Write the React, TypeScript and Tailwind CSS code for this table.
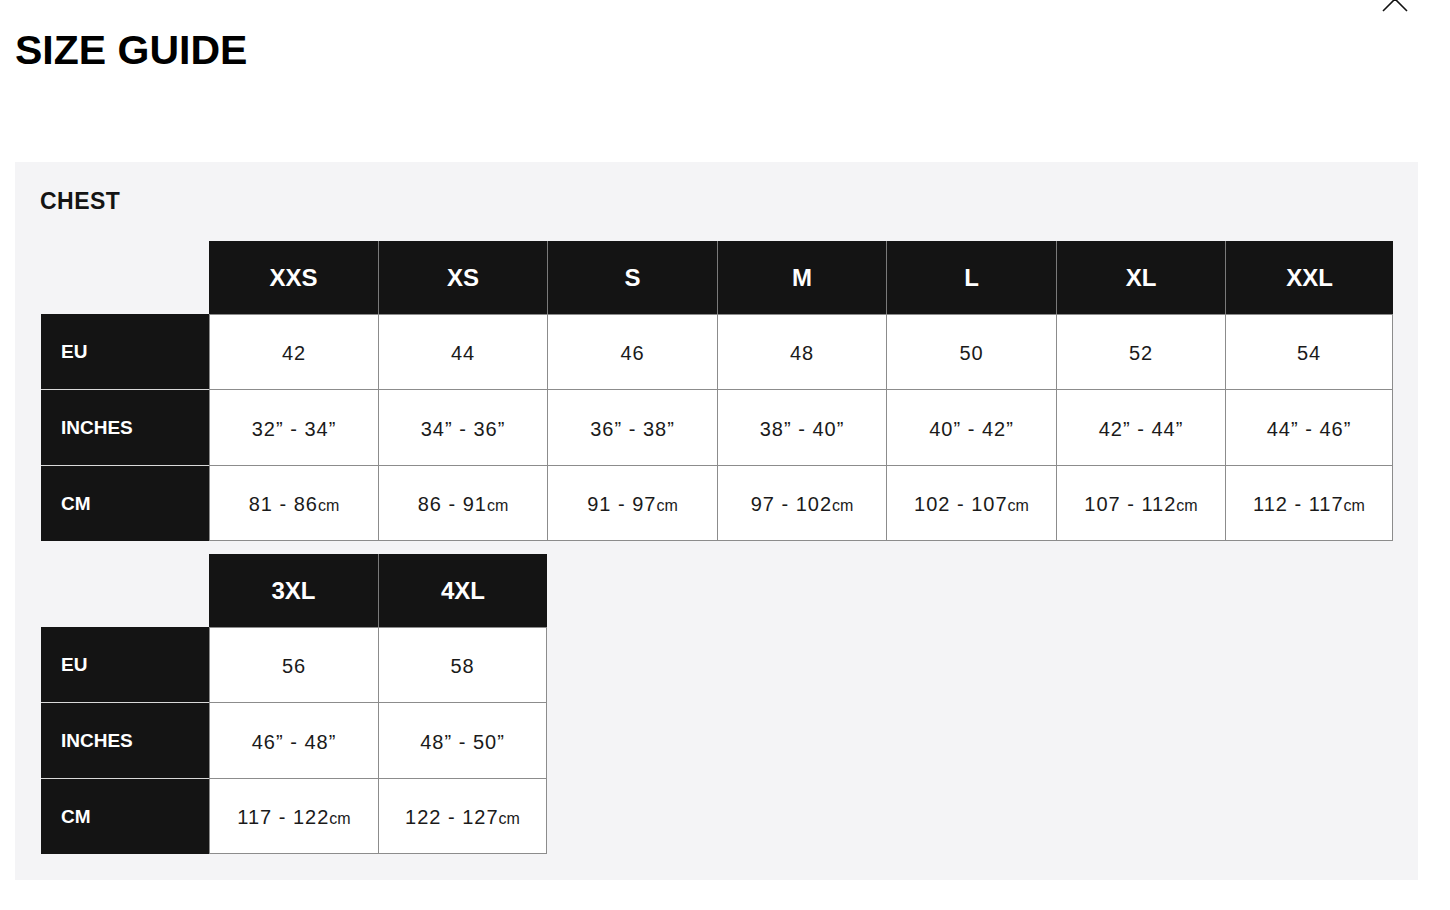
import React from 'react';

type Row = { label: string; values: React.ReactNode[] };

const colWidths = ['w-[169px]', 'w-[169px]', 'w-[170px]', 'w-[169px]', 'w-[170px]', 'w-[169px]', 'w-[168px]'];
const rowHeights = ['h-[75px]', 'h-[76px]', 'h-[76px]'];

const cm = (a: number, b: number) => (
  <>
    {a} - {b}
    <span className="text-[16px] tracking-normal">cm</span>
  </>
);

const tableOne = {
  sizes: ['XXS', 'XS', 'S', 'M', 'L', 'XL', 'XXL'],
  rows: [
    { label: 'EU', values: ['42', '44', '46', '48', '50', '52', '54'] },
    {
      label: 'INCHES',
      values: ['32” - 34”', '34” - 36”', '36” - 38”', '38” - 40”', '40” - 42”', '42” - 44”', '44” - 46”'],
    },
    {
      label: 'CM',
      values: [cm(81, 86), cm(86, 91), cm(91, 97), cm(97, 102), cm(102, 107), cm(107, 112), cm(112, 117)],
    },
  ] as Row[],
};

const tableTwo = {
  sizes: ['3XL', '4XL'],
  rows: [
    { label: 'EU', values: ['56', '58'] },
    { label: 'INCHES', values: ['46” - 48”', '48” - 50”'] },
    { label: 'CM', values: [cm(117, 122), cm(122, 127)] },
  ] as Row[],
};

function SizeTable({ sizes, rows }: { sizes: string[]; rows: Row[] }) {
  return (
    <div className="flex flex-col ml-[1px]">
      <div className="flex">
        <div className="w-[168px] h-[73px]" />
        {sizes.map((s, i) => (
          <div
            key={s}
            className={`${colWidths[i]} h-[73px] bg-[#141414] text-white font-bold text-[24px] flex items-center justify-center ${
              i > 0 ? 'border-l border-[#7a7a7a]' : ''
            }`}
          >
            {s}
          </div>
        ))}
      </div>
      {rows.map((row, r) => (
        <div key={row.label} className="flex">
          <div
            className={`w-[168px] ${rowHeights[r]} bg-[#141414] text-white font-bold text-[19px] flex items-center pl-[20px] pt-[2px] ${
              r > 0 ? 'border-t border-[#d9d9d9]' : ''
            }`}
          >
            {row.label}
          </div>
          {row.values.map((v, i) => (
            <div
              key={i}
              className={`${colWidths[i]} ${rowHeights[r]} bg-white text-[#1a1a1a] text-[20px] tracking-[0.05em] flex items-center justify-center pt-[2px] border-l border-t border-[#8c8c8c] ${
                i === row.values.length - 1 ? 'border-r' : ''
              } ${r === rows.length - 1 ? 'border-b' : ''}`}
            >
              <span>{v}</span>
            </div>
          ))}
        </div>
      ))}
    </div>
  );
}

export default function App() {
  return (
    <div
      className="relative w-[1450px] h-[910px] bg-white overflow-hidden"
      style={{ fontFamily: '"Liberation Sans", Arial, Helvetica, sans-serif' }}
    >
      <button className="absolute right-[41px] top-[-15px] w-[28px] h-[28px] text-[#111]">
        <svg viewBox="0 0 28 28" width="28" height="28" fill="none" stroke="currentColor" strokeWidth="1.6">
          <path d="M2 2 L26 26 M26 2 L2 26" />
        </svg>
      </button>

      <div className="px-[15px] pt-[30px]">
        <h1 className="text-[41px] font-bold leading-none text-black">SIZE GUIDE</h1>

        <div className="mt-[91px] w-[1403px] bg-[#f4f4f6] pl-[25px] pr-[25px] pt-[28px] pb-[26px]">
          <h2 className="text-[23px] font-bold leading-none text-[#141414] tracking-[0.02em]">CHEST</h2>
          <div className="mt-[28px] flex flex-col gap-[13px]">
            <SizeTable sizes={tableOne.sizes} rows={tableOne.rows} />
            <SizeTable sizes={tableTwo.sizes} rows={tableTwo.rows} />
          </div>
        </div>
      </div>
    </div>
  );
}
